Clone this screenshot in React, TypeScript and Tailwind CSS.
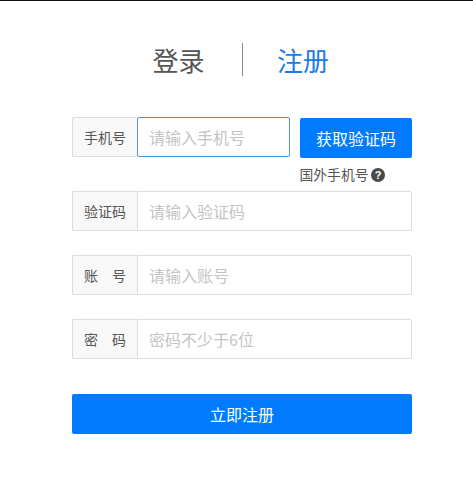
import React from "react";

function Field({ label, placeholder, focus }: { label: React.ReactNode; placeholder: string; focus?: boolean }) {
  return (
    <div className="flex h-10 w-full">
      <div className="flex w-[65px] shrink-0 items-center justify-center rounded-l-[2px] border border-r-0 border-[#dcdcdc] bg-[#f8f8f8] text-sm text-[#555]">
        {label}
      </div>
      <input
        readOnly
        placeholder={placeholder}
        className={
          focus
            ? "h-10 min-w-0 flex-1 rounded-[2px] border border-[#4a97d6] bg-white px-[11px] text-base text-[#555] outline-none placeholder:text-[#c4c4c4]"
            : "h-10 min-w-0 flex-1 rounded-r-[2px] border border-[#dcdcdc] bg-white px-[11px] text-base text-[#555] outline-none placeholder:text-[#c4c4c4]"
        }
      />
    </div>
  );
}

export default function App() {
  return (
    <div className="h-[489px] w-[473px] overflow-hidden border-t border-[#111] bg-white font-['Noto_Sans_CJK_SC',sans-serif]">
      <div className="flex h-[116px] items-start pl-[115px] pt-[42px]">
        <span className="w-[127px] text-center text-[26px] leading-[34px] text-[#555]">登录</span>
        <span className="h-[33px] w-px bg-[#888]" />
        <span className="w-[120px] text-center text-[26px] leading-[34px] text-[#1a7be3]">注册</span>
      </div>
      <div className="ml-[72px] flex w-[340px] flex-col">
        <div className="flex items-start">
          <div className="w-[218px]">
            <Field label="手机号" placeholder="请输入手机号" focus />
          </div>
          <button className="ml-[10px] mt-px h-10 w-[112px] rounded-[2px] bg-[#007bff] text-base text-white">获取验证码</button>
        </div>
        <div className="mt-[7px] flex h-[19px] items-center pl-[227.5px] text-[13.8px] leading-[19px] text-[#555]">
          国外手机号
          <svg className="ml-[3px]" width="14" height="14" viewBox="0 0 14 14">
            <circle cx="7" cy="7" r="7" fill="#4a4a4a" />
            <text x="7" y="11" textAnchor="middle" fontSize="11" fontWeight="700" fill="#fff" fontFamily="Liberation Sans">?</text>
          </svg>
        </div>
        <div className="mt-[7px] flex flex-col gap-6">
          <Field label="验证码" placeholder="请输入验证码" />
          <Field label={<span className="flex w-[42px] justify-between"><span>账</span><span>号</span></span>} placeholder="请输入账号" />
          <Field label={<span className="flex w-[42px] justify-between"><span>密</span><span>码</span></span>} placeholder="密码不少于6位" />
        </div>
        <button className="mt-[35px] h-10 w-full rounded-[2px] bg-[#007bff] text-base text-white">立即注册</button>
      </div>
    </div>
  );
}
